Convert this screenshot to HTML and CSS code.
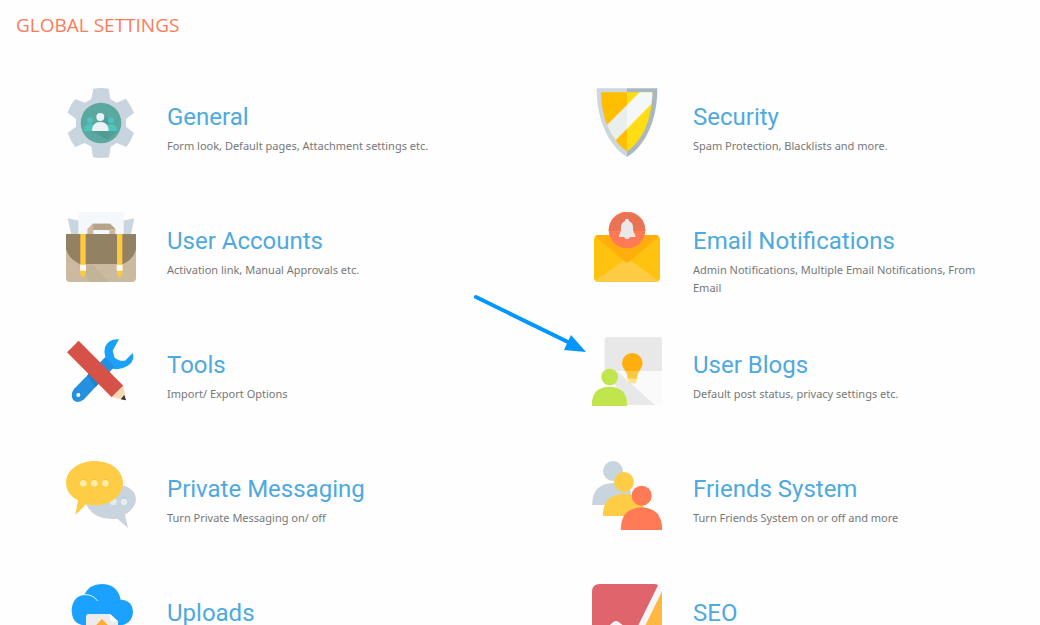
FILE: index.html
```html
<!DOCTYPE html>
<html lang="en">
<head>
	<meta charset="utf-8">
	<title>Global Settings</title>
	<meta name="viewport" content="width=device-width, initial-scale=1">
	<link rel="stylesheet" href="styles.css">
</head>
<body>
	<h1 class="page-title">GLOBAL SETTINGS</h1>
	<main class="settings">
		<section class="setting">
			<svg class="icon" viewBox="0 0 210 210" aria-hidden="true">
				<path fill="#c9d5de" d="M82 2Q105-2 128 2L133 33 152 44 180 32Q193 49 204 74L180 93V116L204 135Q195 160 181 177L152 165 134 176 129 208Q105 212 81 208L76 176 56 165 28 177Q14 160 5 135L30 116V93L5 74Q14 49 28 33L57 44 76 33Z"/>
				<circle fill="#5ba8a1" cx="105" cy="105" r="61"/>
				<path fill="#4b958f" d="M110 77L133 98 153 128 124 156 80 129 108 120Z" opacity=".6"/>
				<g fill="#4cc6bd">
					<circle cx="72" cy="97" r="9"/>
					<circle cx="135" cy="97" r="9"/>
					<path d="M54 129Q54 108 72 108 90 108 90 129ZM116 129Q116 108 135 108 153 108 153 129Z"/>
				</g>
				<g fill="#ecf1f5">
					<circle cx="103" cy="87" r="12"/>
					<path d="M78 129Q78 102 103 102 128 102 128 129Z"/>
				</g>
			</svg>
			<div class="info">
				<h2><a href="#general">General</a></h2>
				<p>Form look, Default pages, Attachment settings etc.</p>
			</div>
		</section>
		<section class="setting">
			<svg class="icon" viewBox="0 0 210 210" aria-hidden="true">
				<path fill="#cbd6de" d="M14 1H105V207C54 176 14 104 14 1Z"/>
				<path fill="#a8b7c0" d="M105 1H196C196 104 156 176 105 207Z"/>
				<path fill="#ffbf00" d="M27 13H105V190C60 159 29 99 27 13Z"/>
				<path fill="#ffdc14" d="M105 13H181C180 99 150 159 105 190Z"/>
				<path fill="#e9eeee" d="M45 111L105 51V122L71 157Q55 138 45 111Z"/>
				<path fill="#f5f8f9" d="M105 51L143 13H181Q181 32 178 48L105 122Z"/>
			</svg>
			<div class="info">
				<h2><a href="#security">Security</a></h2>
				<p>Spam Protection, Blacklists and more.</p>
			</div>
		</section>

		<section class="setting">
			<svg class="icon" viewBox="0 0 210 210" aria-hidden="true">
				<path fill="#c9d6df" d="M5 19L40 26V80H18ZM205 19L170 26V80H192Z"/>
				<path fill="#f4f8fb" d="M37 0H173V75H37Z"/>
				<path fill="#cbbaa0" d="M0 68H210V198Q210 210 198 210H12Q0 210 0 198Z"/>
				<path fill="#bcac92" d="M28 145L73 210H130L75 152Z" opacity=".5"/>
				<path fill="#cbbaa0" d="M64 68V51L80 35H132L148 51V68H130V54H82V68Z"/>
				<path fill="#b5a488" d="M80 35H132L148 51H130V54H82Z"/>
				<path fill="#928162" d="M0 66H210V112Q202 142 171 156H42Q10 142 0 112Z"/>
				<path fill="#ffc93d" d="M43 66H59V187L51 197 43 187ZM153 66H169V187L161 197 153 187Z"/>
				<path fill="#fff9e9" d="M42 158H60V176H42ZM152 158H170V176H152Z"/>
			</svg>
			<div class="info">
				<h2><a href="#accounts">User Accounts</a></h2>
				<p>Activation link, Manual Approvals etc.</p>
			</div>
		</section>
		<section class="setting">
			<svg class="icon" viewBox="0 0 210 210" aria-hidden="true">
				<rect fill="#ffc20e" x="6" y="69" width="198" height="141" rx="13"/>
				<path fill="#ffcb43" d="M10 207L92 147Q105 138 118 147L200 207Q196 210 190 210H20Q14 210 10 207Z"/>
				<path fill="#ffae0d" d="M10 73Q14 69 20 69H190Q196 69 200 73L113 148Q105 156 97 148Z"/>
				<circle fill="#ff7a55" cx="105" cy="54" r="55"/>
				<path fill="#e87455" d="M50 57A55 55 0 1 1 160 57Z"/>
				<path fill="#ebe9e8" d="M105 20Q111 20 111 27 123 33 123 46 123 63 130 69V75H114Q111 82 105 82 99 82 96 75H81V69Q87 63 87 46 87 33 99 27 99 20 105 20Z"/>
			</svg>
			<div class="info">
				<h2><a href="#notifications">Email Notifications</a></h2>
				<p>Admin Notifications, Multiple Email Notifications, From Email</p>
			</div>
		</section>

		<section class="setting">
			<svg class="icon" viewBox="0 0 210 210" aria-hidden="true">
				<path fill="#1ba1fb" d="M159 10Q128 7 117 34 113 48 118 63L133 96Q150 103 171 96 196 89 202 67 203 58 200 51L177 74Q158 76 146 65L140 44Z"/>
				<path fill="#2590dd" d="M118 63L145 93 54 190Q35 205 21 191 12 176 24 159Z"/>
				<path fill="#1b83cf" d="M76 103L106 135 88 154 64 118Z"/>
				<circle fill="#fff" cx="37" cy="177" r="6"/>
				<path fill="#d65249" d="M38 14L172 149 137 184 3 49Z"/>
				<path fill="#f7d8b2" d="M172 149L180 193 137 184Z"/>
				<path fill="#333" d="M175 177L180 193 164 190Z"/>
			</svg>
			<div class="info">
				<h2><a href="#tools">Tools</a></h2>
				<p>Import/ Export Options</p>
			</div>
		</section>
		<section class="setting">
			<svg class="icon" viewBox="0 0 210 210" aria-hidden="true">
				<rect fill="#fafafa" x="38" y="3" width="172" height="204" rx="8"/>
				<path fill="#e8e8e8" d="M38 105V11Q38 3 46 3H202Q210 3 210 11V105Z"/>
				<path fill="#e8e8e8" d="M75 105L188 207H104L60 130Z"/>
				<path fill="#ffae10" d="M90 82A31 31 0 1 1 152 82Q152 91 142 105H100Q90 91 90 82Z"/>
				<path fill="#ffc740" d="M100 105H142Q137 113 136 120V128H106V120Q105 113 100 105Z"/>
				<path fill="#ffe380" d="M108 128H135L132 142H111Z"/>
				<circle fill="#c1e54c" cx="53" cy="123" r="25"/>
				<path fill="#c1e54c" d="M0 210Q-2 183 13 166 27 152 52 152 77 152 92 166 107 183 105 210Z"/>
			</svg>
			<div class="info">
				<h2><a href="#blogs">User Blogs</a></h2>
				<p>Default post status, privacy settings etc.</p>
			</div>
		</section>

		<section class="setting">
			<svg class="icon" viewBox="0 0 210 210" aria-hidden="true">
				<path fill="#c9d5de" d="M137 71Q209 75 210 118 209 145 177 164L186 204 154 176Q84 184 60 132Z"/>
				<circle fill="#e4ecf2" cx="142" cy="125" r="10"/>
				<circle fill="#b5c2cc" cx="174" cy="122" r="10"/>
				<circle fill="#e4ecf2" cx="174" cy="125" r="10"/>
				<path fill="#ffcc46" d="M86 3C135 3 171 32 171 69S135 136 86 136Q73 136 60 133L28 165 36 121Q0 103 0 69C0 32 37 3 86 3Z"/>
				<g fill="#f5c040">
					<circle cx="52" cy="67" r="10"/>
					<circle cx="85" cy="67" r="10"/>
					<circle cx="118" cy="67" r="10"/>
				</g>
				<g fill="#ffeda8">
					<circle cx="52" cy="70" r="10"/>
					<circle cx="85" cy="70" r="10"/>
					<circle cx="118" cy="70" r="10"/>
				</g>
			</svg>
			<div class="info">
				<h2><a href="#messaging">Private Messaging</a></h2>
				<p>Turn Private Messaging on/ off</p>
			</div>
		</section>
		<section class="setting">
			<svg class="icon" viewBox="0 0 210 210" aria-hidden="true">
				<g fill="#c9d5de">
					<circle cx="63" cy="33" r="30"/>
					<path d="M1 135Q-1 109 14 88 35 69 63 69 102 69 118 96V135Z"/>
				</g>
				<g fill="#ffcc46">
					<circle cx="96" cy="66" r="30"/>
					<path d="M33 168Q31 142 46 121 67 101 96 101 127 101 146 121 160 142 158 168Z"/>
				</g>
				<g fill="#ff7a55">
					<circle cx="149" cy="107" r="30"/>
					<path d="M87 210Q85 184 99 163 119 142 149 142 178 142 198 163 212 184 210 210Z"/>
				</g>
			</svg>
			<div class="info">
				<h2><a href="#friends">Friends System</a></h2>
				<p>Turn Friends System on or off and more</p>
			</div>
		</section>

		<section class="setting">
			<svg class="icon" viewBox="0 0 210 210" aria-hidden="true">
				<path fill="#1ba1ff" d="M54 33Q70 0 107 0 155 1 164 47 201 49 201 86 196 122 160 124H54Q17 119 17 78 20 37 54 33Z"/>
				<path fill="none" stroke="#e6f5ff" stroke-width="3" d="M54 32Q79 30 95 51"/>
				<path fill="#ececec" d="M69 90H132L156 112V200Q156 206 150 206H66Q60 206 60 200V98Q60 90 69 90Z"/>
				<path fill="#fff" d="M132 90L156 112H138Q132 112 132 106Z"/>
				<path fill="#ffae2d" d="M108 105L144 142H123V180H93V142H72Z"/>
			</svg>
			<div class="info">
				<h2><a href="#uploads">Uploads</a></h2>
			</div>
		</section>
		<section class="setting">
			<svg class="icon" viewBox="0 0 210 210" aria-hidden="true">
				<path fill="#f5f6f7" d="M24 0H186Q210 0 210 24V186Q210 210 186 210H24Q0 210 0 186Z"/>
				<path fill="#df646b" d="M24 0H186Q193 0 198 4L126 150 81 115Q72 107 63 115L0 170V24Q0 0 24 0Z"/>
				<path fill="#ffb840" d="M210 22V186Q210 210 186 210H118Z"/>
			</svg>
			<div class="info">
				<h2><a href="#seo">SEO</a></h2>
			</div>
		</section>

		<svg class="arrow" viewBox="0 0 114 60" aria-hidden="true">
			<path stroke="#0096ff" stroke-width="4" stroke-linecap="round" d="M4 4L98 50"/>
			<path fill="#0096ff" d="M99 42L114 59 92 57Z"/>
		</svg>
	</main>
</body>
</html>
```

FILE: styles.css
```css
body {
	margin: 0;
	background: #fefefe;
	color: #777;
	font-family: "Noto Sans", "Open Sans", sans-serif;
}

h1, h2, p {
	margin: 0;
	font-weight: normal;
}

.page-title {
	padding: 12px 16px 0;
	color: #ff7a59;
	font-family: "Open Sans", "Noto Sans", sans-serif;
	font-size: 19px;
	line-height: 26px;
}

.settings {
	position: relative;
	display: grid;
	grid-template-columns: 1fr 1fr;
	grid-auto-rows: minmax(124px, auto);
	column-gap: 120px;
	padding: 50px 42px 0 66px;
}

.setting {
	display: flex;
	align-items: flex-start;
	gap: 31px;
}

.icon {
	flex: none;
	width: 70px;
	height: 70px;
}

.info {
	flex: 1;
	padding-top: 12px;
}

.info h2 {
	font-family: Roboto, sans-serif;
	font-size: 24px;
	line-height: 34px;
}

.info a {
	color: #4ea9df;
	text-decoration: none;
}

.info a:hover {
	text-decoration: underline;
}

.info p {
	padding-top: 3px;
	font-size: 11px;
	line-height: 18px;
}

/* pointer to User Blogs, drawn over the grid */
.arrow {
	position: absolute;
	top: 255px;
	left: 472px;
	width: 114px;
	height: 60px;
}
```
